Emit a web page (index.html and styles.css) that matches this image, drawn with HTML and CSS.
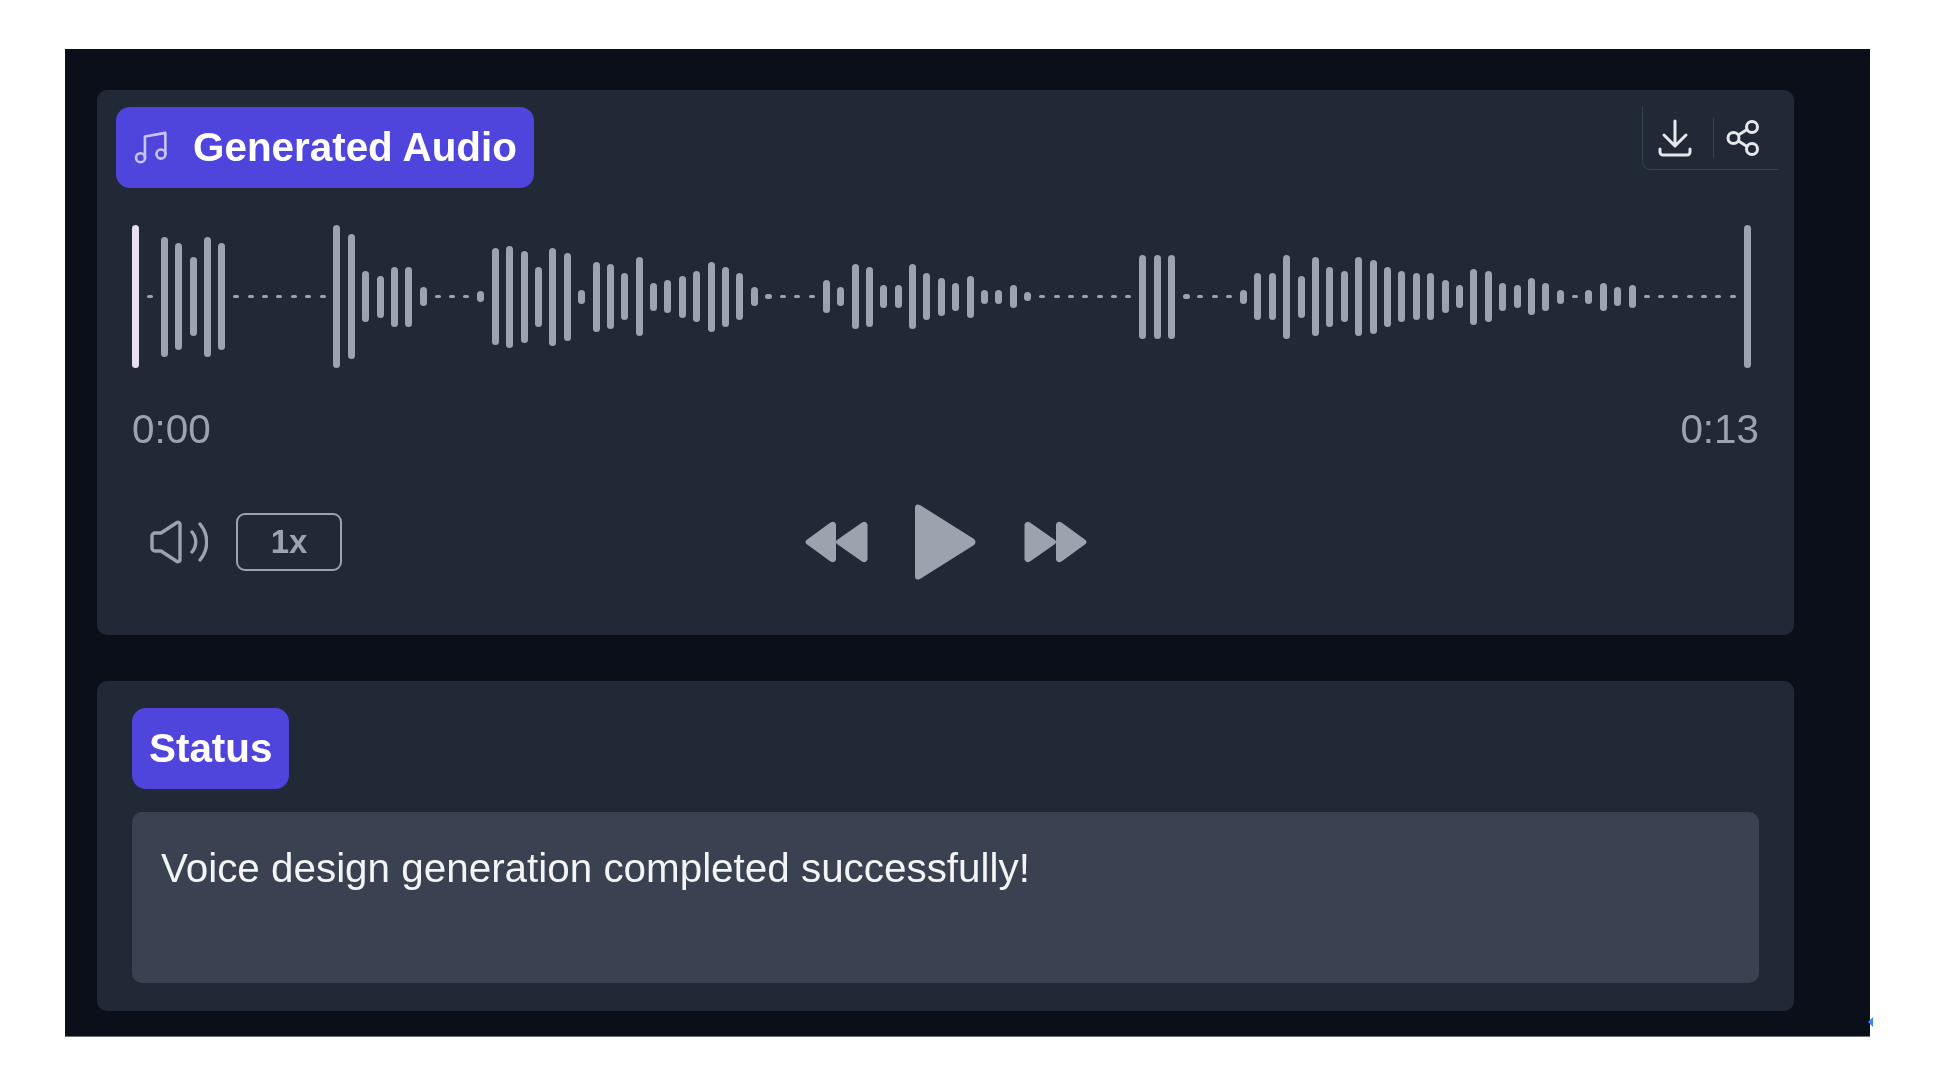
FILE: index.html
```html
<!DOCTYPE html>
<html lang="en">
<head>
<meta charset="utf-8">
<title>Generated Audio</title>
<link rel="stylesheet" href="styles.css">
</head>
<body>
<main class="panel">
  <section class="card card-audio">
    <header class="audio-head">
      <div class="badge badge-audio">
        <svg class="icon-music" viewBox="0 0 24 24" fill="none" stroke="currentColor" stroke-width="1.8" stroke-linecap="round" stroke-linejoin="round"><path d="M7.500 19V4.500l14-2.500v14.500"/><circle cx="4.500" cy="19" r="3.100"/><circle cx="18.500" cy="16.500" r="3.100"/></svg>
        <span>Generated Audio</span>
      </div>
      <div class="actions">
        <button class="action-btn"><svg viewBox="0 0 34 38" fill="none" stroke="currentColor" stroke-width="3" stroke-linecap="round" stroke-linejoin="round"><path d="M17 2v25M6 16l11 11 11-11M2 30v3a3 3 0 0 0 3 3h24a3 3 0 0 0 3-3v-3"/></svg></button>
        <span class="action-sep"></span>
        <button class="action-btn"><svg viewBox="0 0 34 38" fill="none" stroke="currentColor" stroke-width="3" stroke-linecap="round" stroke-linejoin="round"><circle cx="7.500" cy="19" r="5.500"/><circle cx="26" cy="8" r="5.500"/><circle cx="26" cy="30" r="5.500"/><path d="M12.500 16l8.500-5.500M12.500 22l8.500 5.500"/></svg></button>
      </div>
    </header>
    <div class="player">
      <div class="wave" id="wave"></div>
      <div class="times"><span>0:00</span><span>0:13</span></div>
      <div class="controls">
        <div class="controls-left">
          <svg class="icon-volume" viewBox="0 0 58 44" fill="none" stroke="currentColor" stroke-width="3.400" stroke-linecap="round" stroke-linejoin="round"><path d="M2 16a3 3 0 0 1 3-3h6L27 2.500a2 2 0 0 1 3 1.500v36a2 2 0 0 1-3 1.500L11 31H5a3 3 0 0 1-3-3z"/><path d="M42 12c5 6 5 14 0 20M50 4c9 11 9 25 0 36"/></svg>
          <button class="rate">1x</button>
        </div>
        <div class="transport">
          <svg class="icon-skip" viewBox="0 0 63 42" fill="currentColor"><path d="M1.500 19L25.500 1.500q4.500-2 5.500 2v35q-1 4-5.500 2L1.500 23q-2-2 0-4z"/><path d="M32 19L57 1.500q4-2 5.500 2v35q-1.500 4-5.500 2L32 23q-2-2 0-4z"/></svg>
          <svg class="icon-play" viewBox="0 0 61 76" fill="currentColor"><path d="M0 4q0-5 5-3l54 34q3 3 0 6L5 75q-5 2-5-3z"/></svg>
          <svg class="icon-skip" viewBox="0 0 63 42" fill="currentColor"><path d="M61.500 19L37.500 1.500q-4.500-2-5.500 2v35q1 4 5.500 2L61.500 23q2-2 0-4z"/><path d="M31 19L6 1.500q-4-2-5.500 2v35q1.500 4 5.500 2L31 23q2-2 0-4z"/></svg>
        </div>
        <div></div>
      </div>
    </div>
  </section>
  <section class="card card-status">
    <div class="badge badge-status">Status</div>
    <div class="status-box">Voice design generation completed successfully!</div>
  </section>
  <span class="edge-mark"></span>
</main>
<script src="wave.js"></script>
</body>
</html>
```
FILE: styles.css
```css
* { box-sizing: border-box; }
html, body { margin: 0; background: #fff; }
body {
  width: 1938px;
  height: 1088px;
  padding: 49px 0 0 65px;
  font-family: "Liberation Sans", Arial, sans-serif;
  overflow: hidden;
}
.panel {
  position: relative;
  width: 1805px;
  height: 988px;
  padding: 41px 0 0 32px;
  background: #0b0f19;
  border-bottom: 1px solid #6b7280;
  display: flex;
  flex-direction: column;
  gap: 46px;
  filter: blur(0.4px);
}
.card {
  width: 1697px;
  background: #222936;
  border-radius: 10px;
}
.card-audio {
  height: 545px;
  padding: 17px 16px 0 19px;
}
.audio-head {
  display: flex;
  justify-content: space-between;
  align-items: flex-start;
}
.badge {
  display: flex;
  align-items: center;
  background: #4f45dd;
  color: #fff;
  font-weight: 700;
  font-size: 40.4px;
  height: 81px;
  padding-bottom: 1px;
  border-radius: 14px;
}
.badge-audio { width: 418px; padding-left: 18px; gap: 24px; }
.icon-music { width: 35px; height: 35px; color: #c7c4f2; }
.actions {
  display: flex;
  align-items: center;
  gap: 12px;
  width: 136px;
  height: 64px;
  margin-top: -1px;
  padding: 0 0 0 15px;
  border-left: 1px solid #374151;
  border-bottom: 1px solid #374151;
  border-bottom-left-radius: 8px;
  color: #e5e7eb;
}
.action-btn {
  display: flex;
  padding: 0;
  border: 0;
  background: none;
  color: inherit;
}
.action-btn svg { width: 34px; height: 38px; }
.action-sep { width: 1px; height: 40px; background: #374151; margin: 0 0 0 9px; }
.player { padding: 0 19px 0 16px; }
.wave {
  display: flex;
  justify-content: space-between;
  align-items: center;
  width: 1620px;
  height: 143px;
  margin-top: 37px;
}
.bar {
  flex: none;
  width: 7px;
  border-radius: 4px;
  background: #9ca3af;
}
.bar-on { background: #e5e0ef; }
.bar-dash { width: 6px; margin: 0 0.5px; }
.times {
  display: flex;
  justify-content: space-between;
  margin-top: 38px;
  font-size: 40.4px;
  line-height: 46px;
  color: #9ca3af;
}
.controls {
  display: grid;
  grid-template-columns: 1fr auto 1fr;
  align-items: center;
  margin-top: 52px;
  color: #9ca3af;
}
.controls-left {
  display: flex;
  align-items: center;
  gap: 28px;
  padding-left: 18px;
}
.icon-volume { width: 58px; height: 44px; }
.rate {
  width: 106px;
  height: 58px;
  padding: 0;
  background: none;
  border: 2px solid #9ca3af;
  border-radius: 9px;
  color: #9ca3af;
  font: 700 33px "Liberation Sans", Arial, sans-serif;
}
.transport {
  display: flex;
  align-items: center;
  gap: 47.5px;
}
.icon-skip { width: 63px; height: 42px; }
.icon-play { width: 61px; height: 76px; }
.card-status {
  height: 330px;
  padding: 27px 35px 0 35px;
}
.badge-status { width: 157px; padding-left: 17px; }
.status-box {
  height: 171px;
  margin-top: 23px;
  padding: 33px 29px 0;
  background: #3a4150;
  border-radius: 10px;
  color: #f3f4f6;
  font-size: 40.4px;
  line-height: 46px;
}
.edge-mark {
  position: absolute;
  right: -3px;
  top: 968px;
  border: 5px solid transparent;
  border-left-width: 0;
  border-right: 5px solid #3b82f6;
}
```
FILE: wave.js
```js
var heights = [143,3,120,107,79,120,107,3,3,3,3,3,3,3,143,125,51,42,60,60,19,3,3,3,11,97,102,92,60,98,88,14,70,65,47,79,28,33,42,51,70,60,47,19,5,3,3,3,33,19,65,60,23,23,65,47,38,28,42,14,14,23,9,3,3,3,3,3,3,3,84,84,84,5,3,3,3,14,47,47,84,42,79,60,51,79,74,60,51,47,47,33,23,56,51,28,23,37,28,14,3,14,28,19,23,3,3,3,3,3,3,3,143];
var wave = document.getElementById("wave");
heights.forEach(function (h, i) {
  var bar = document.createElement("span");
  bar.className = i === 0 ? "bar bar-on" : h === 3 ? "bar bar-dash" : "bar";
  bar.style.height = h + "px";
  wave.appendChild(bar);
});
```
